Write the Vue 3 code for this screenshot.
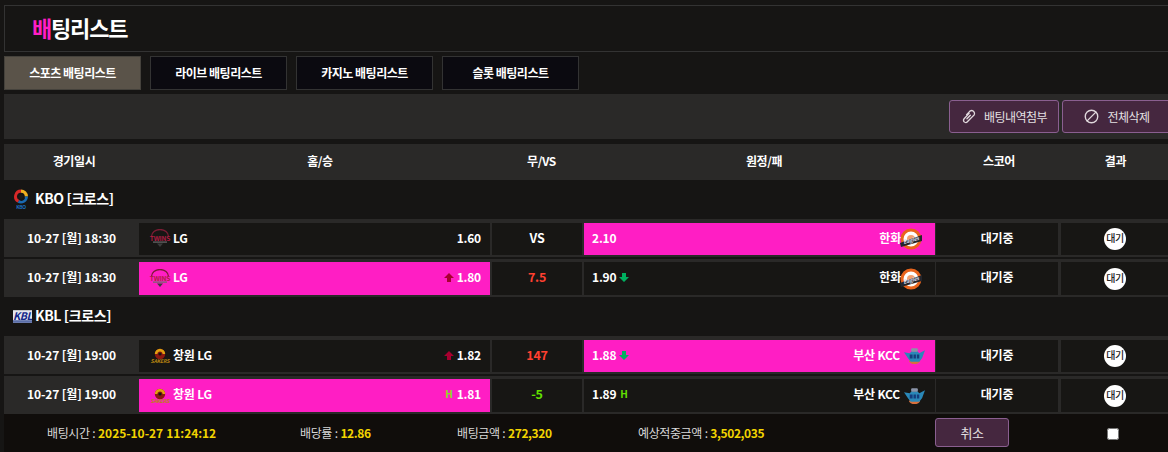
<script setup>
const tabs = ['스포츠 배팅리스트', '라이브 배팅리스트', '카지노 배팅리스트', '슬롯 배팅리스트'];
const headers = ['경기일시', '홈/승', '무/VS', '원정/패', '스코어', '결과'];

const groups = [
  {
    name: 'KBO [크로스]',
    logo: 'kbo',
    rows: [
      {
        time: '10-27 [월] 18:30', home: 'LG', homeLogo: 'twins', homeOdds: '1.60',
        mid: 'VS', midClass: '', away: '한화', awayLogo: 'eagles', awayOdds: '2.10', pick: 'away',
      },
      {
        time: '10-27 [월] 18:30', home: 'LG', homeLogo: 'twins', homeOdds: '1.80', homeMark: 'up',
        mid: '7.5', midClass: 'red', away: '한화', awayLogo: 'eagles', awayOdds: '1.90', awayMark: 'down', pick: 'home',
      },
    ],
  },
  {
    name: 'KBL [크로스]',
    logo: 'kbl',
    rows: [
      {
        time: '10-27 [월] 19:00', home: '창원 LG', homeLogo: 'sakers', homeOdds: '1.82', homeMark: 'up',
        mid: '147', midClass: 'red', away: '부산 KCC', awayLogo: 'kcc', awayOdds: '1.88', awayMark: 'down', pick: 'away',
      },
      {
        time: '10-27 [월] 19:00', home: '창원 LG', homeLogo: 'sakers', homeOdds: '1.81', homeMark: 'h',
        mid: '-5', midClass: 'green', away: '부산 KCC', awayLogo: 'kcc', awayOdds: '1.89', awayMark: 'h', pick: 'home',
      },
    ],
  },
];
</script>

<template>
  <div class="page">
    <svg class="defs" aria-hidden="true">
      <symbol id="kbo" viewBox="0 0 16 20">
        <path d="M8 .5a7 7 0 0 1 7 7h-3.2A3.8 3.8 0 0 0 8 3.7z" fill="#f0b020" />
        <path d="M15 7.5a7 7 0 0 1-10.5 6L6.3 11a3.4 3.4 0 0 0 5.5-3.5z" fill="#1a6ab0" />
        <path d="M4.5 13.5A7 7 0 0 1 8 .5v3.2a3.8 3.8 0 0 0-1.7 7.3z" fill="#d82828" />
        <path d="M8 5.2a2.3 2.3 0 1 1-1.6 4 3 3 0 0 1 1.6-4z" fill="#1c1a18" />
        <text x="8" y="19.5" class="tiny" fill="#1a70c0" font-size="5" text-anchor="middle">KBO</text>
      </symbol>
      <symbol id="kbl" viewBox="0 0 18 12">
        <rect width="18" height="12" fill="#e4e6ee" />
        <rect y="9.5" width="18" height="2.5" fill="#5a6ea8" />
        <text x="9" y="9.6" class="tiny" fill="#14288a" font-size="10" font-weight="700" font-style="italic" text-anchor="middle">KBL</text>
      </symbol>
      <symbol id="twins" viewBox="0 0 24 20">
        <path d="M3.5 7.5a8.5 7 0 0 1 17 0" fill="none" stroke="#7c1c34" stroke-width="1.3" />
        <text x="12" y="11.5" class="tiny" fill="#b01c42" font-size="6.6" font-weight="700" text-anchor="middle">TWINS</text>
        <rect x="5" y="12.5" width="14" height="1.2" fill="#6a6a6a" />
        <path d="M9 14.5h6l-3 3.5z" fill="#3c3c3c" />
      </symbol>
      <symbol id="eagles" viewBox="0 0 22 22">
        <circle cx="11" cy="11" r="9" fill="#fff" stroke="#e8641c" stroke-width="3" />
        <circle cx="11" cy="11" r="4" fill="#f0a070" />
        <path d="M0 15 22 7v6L1 19z" fill="#23252c" />
        <text x="11" y="14" class="tiny" fill="#d8d8e4" font-size="5.4" font-style="italic" text-anchor="middle" transform="rotate(-14 11 12)">Eagles</text>
      </symbol>
      <symbol id="sakers" viewBox="0 0 24 16">
        <circle cx="12" cy="6" r="5.2" fill="#8c1810" />
        <path d="M6.8 6a5.2 5.2 0 0 1 10.4 0h-2.6a2.6 2.6 0 0 0-5.2 0z" fill="#e0a010" />
        <circle cx="12" cy="6" r="1.6" fill="#181410" />
        <text x="12" y="15" class="tiny" fill="#b88410" font-size="5.2" font-weight="700" font-style="italic" text-anchor="middle">SAKERS</text>
      </symbol>
      <symbol id="kcc" viewBox="0 0 22 18">
        <ellipse cx="11" cy="14.5" rx="5.5" ry="3" fill="#d8703c" />
        <path d="M0 5 6 6l2-2h6l2 2 6-3-3 8-3 4H7l-3-4z" fill="#2a88b8" />
        <rect x="7.5" y="1" width="7" height="3.5" rx="1" fill="#8a94a8" />
        <path d="M6 7.5h3v4H6zM10 7.5h2.5v4H10zM13.5 7.5H16v4h-2.5z" fill="#143c7c" />
      </symbol>
    </svg>

    <div class="inner">
      <h1 class="title"><span class="pink">배</span>팅리스트</h1>

      <div class="tabs">
        <div v-for="(tab, i) in tabs" :key="tab" class="tab" :class="{ active: i === 0 }">{{ tab }}</div>
      </div>

      <div class="toolbar">
        <button class="btn">
          <svg viewBox="0 0 24 24" class="btn-icon">
            <path d="M13 7 5 15.5a3.6 3.6 0 0 0 5.2 5L19.5 11a3.6 3.6 0 0 0-5.2-7.6L9 9" />
            <path d="M9.5 15.5 15 10" />
          </svg>
          배팅내역첨부
        </button>
        <button class="btn">
          <svg viewBox="0 0 24 24" class="btn-icon">
            <circle cx="12" cy="12" r="10" />
            <path d="M5 19 19 5" />
          </svg>
          전체삭제
        </button>
      </div>

      <div class="head">
        <div v-for="h in headers" :key="h" class="head-cell">{{ h }}</div>
      </div>

      <template v-for="group in groups" :key="group.name">
        <div class="group">
          <svg class="group-logo" :class="group.logo"><use :href="'#' + group.logo" /></svg>
          <span>{{ group.name }}</span>
        </div>
        <div v-for="(row, i) in group.rows" :key="i" class="row" :class="{ second: i === 1 }">
          <div class="cell text-cell time">{{ row.time }}</div>
          <div class="cell side" :class="{ picked: row.pick === 'home' }">
            <svg class="logo"><use :href="'#' + row.homeLogo" /></svg>
            <span class="team">{{ row.home }}</span>
            <span class="spacer"></span>
            <span v-if="row.homeMark === 'h'" class="mark-h">H</span>
            <svg v-else-if="row.homeMark === 'up'" class="arrow up" viewBox="0 0 10 9"><path d="M5 0 10 5H7v4H3V5H0z" /></svg>
            <span class="odds">{{ row.homeOdds }}</span>
          </div>
          <div class="cell text-cell mid" :class="row.midClass">{{ row.mid }}</div>
          <div class="cell side away" :class="{ picked: row.pick === 'away' }">
            <span class="odds">{{ row.awayOdds }}</span>
            <span v-if="row.awayMark === 'h'" class="mark-h">H</span>
            <svg v-else-if="row.awayMark === 'down'" class="arrow down" viewBox="0 0 10 9"><path d="M5 9 0 4h3V0h4v4h3z" /></svg>
            <span class="spacer"></span>
            <span class="team">{{ row.away }}</span>
            <svg class="logo" :class="row.awayLogo"><use :href="'#' + row.awayLogo" /></svg>
          </div>
          <div class="cell text-cell score">대기중</div>
          <div class="cell result"><span class="badge">대기</span></div>
        </div>
      </template>

      <div class="footer">
        <span class="info w1">배팅시간 : <b>2025-10-27 11:24:12</b></span>
        <span class="info w2">배당률 : <b>12.86</b></span>
        <span class="info w3">배팅금액 : <b>272,320</b></span>
        <span class="info w4">예상적중금액 : <b>3,502,035</b></span>
        <button class="btn cancel">취소</button>
        <input type="checkbox" class="check" />
      </div>
    </div>
  </div>
</template>

<style>
  html, body {
    margin: 0;
    background: #161514;
    overflow: hidden;
  }
</style>

<style scoped>
  .page {
    width: 1168px;
    height: 452px;
    overflow: hidden;
    padding: 5px 0 0 4px;
    box-sizing: border-box;
    font-family: "Noto Sans CJK KR", "Noto Sans", sans-serif;
    font-size: 12px;
    color: #fff;
  }

  .defs {
    display: none;
  }

  .inner {
    width: 1168px;
  }

  .title {
    margin: 0;
    height: 47px;
    box-sizing: border-box;
    border: 1px solid #333;
    padding-left: 27px;
    font-size: 22px;
    line-height: 43px;
    font-weight: 700;
    letter-spacing: -1.2px;
  }

  .pink {
    color: #ff1ec4;
  }

  .tabs {
    display: flex;
    gap: 9px;
    margin-top: 4px;
  }

  .tab {
    width: 137px;
    height: 34px;
    box-sizing: border-box;
    border: 1px solid #333;
    background: #0b0a10;
    font-weight: 700;
    line-height: 31px;
    text-align: center;
    letter-spacing: -0.5px;
  }

  .tab.active {
    background: #5a5349;
    border-color: #45423c;
  }

  .toolbar {
    display: flex;
    justify-content: flex-end;
    gap: 3px;
    height: 45px;
    margin-top: 4px;
    padding: 6px 0 0;
    box-sizing: border-box;
    background: #2a2928;
  }

  .btn {
    display: flex;
    align-items: center;
    justify-content: center;
    gap: 8px;
    width: 110px;
    height: 33px;
    padding: 0;
    border: 1px solid #8a5f90;
    border-radius: 3px;
    background: #45273f;
    color: #e4e0e2;
    font-family: inherit;
    font-size: 12px;
    letter-spacing: -0.5px;
  }

  .btn-icon {
    width: 15px;
    height: 15px;
    fill: none;
    stroke: #e0d8dc;
    stroke-width: 2.2;
    stroke-linecap: round;
    stroke-linejoin: round;
  }

  .head {
    display: grid;
    grid-template-columns: 135px 351px 92px 353px 123px 110px;
    height: 36px;
    margin-top: 5px;
    background: #2a2928;
    font-weight: 700;
    line-height: 34px;
    text-align: center;
    letter-spacing: -0.4px;
  }

  .head-cell {
    padding-left: 5px;
  }

  .head-cell:nth-child(2),
  .head-cell:nth-child(3),
  .head-cell:nth-child(4) {
    padding-left: 11px;
  }

  .group {
    display: flex;
    align-items: center;
    height: 39px;
    padding-left: 9px;
    font-size: 14px;
    font-weight: 700;
    letter-spacing: -0.4px;
  }

  .group span {
    margin-bottom: 4px;
  }

  .group-logo {
    width: 16px;
    height: 20px;
    margin: 0 6px 1px 0;
  }

  .group-logo.kbl {
    width: 19px;
    height: 13px;
    margin: 0 3px 0 0;
  }

  .row {
    display: grid;
    grid-template-columns: 135px 351px 92px 353px 123px 110px;
    height: 38px;
    padding: 4px 0 2px;
    box-sizing: border-box;
    background: #2a2928;
  }

  .row.second {
    height: 38px;
    margin-top: 2px;
    padding-top: 3px;
  }

  .cell {
    display: flex;
    align-items: center;
    justify-content: center;
    background: #171614;
    font-weight: 700;
    letter-spacing: -0.2px;
  }

  .text-cell {
    padding-bottom: 4px;
    box-sizing: border-box;
  }

  .time {
    background: #2a2928;
    letter-spacing: -0.1px;
  }

  .mid {
    margin-left: 2px;
    font-size: 12.5px;
  }

  .mid.red {
    color: #ff4030;
  }

  .mid.green {
    color: #62e000;
  }

  .side {
    justify-content: flex-start;
    padding: 0 9px;
  }

  .side.away {
    margin-left: 2px;
    padding: 0 13px 0 8px;
  }

  .picked {
    background: #ff1ec4;
  }

  .spacer {
    flex: 1;
  }

  .team,
  .odds {
    margin-bottom: 4px;
  }

  .logo {
    width: 24px;
    height: 20px;
    margin-right: 1px;
  }

  .away .team {
    margin-right: -1px;
  }

  .away .logo {
    width: 22px;
    height: 22px;
    margin: 0;
  }

  .away .logo.kcc {
    width: 21px;
    height: 18px;
    margin: 0 -3px 0 5px;
  }

  .arrow {
    width: 10px;
    height: 9px;
    margin: 0 3px 2px 0;
  }

  .arrow.up {
    fill: #a80030;
  }

  .arrow.down {
    fill: #00b060;
    margin: 0 0 2px 3px;
  }

  .mark-h {
    margin: 0 4px 4px 0;
    color: #84e020;
    font-size: 10px;
  }

  .away .mark-h {
    margin: 0 0 4px 4px;
    color: #62e000;
  }

  .score {
    margin-left: 1px;
  }

  .result {
    margin-left: 3px;
    justify-content: flex-start;
    padding-left: 43px;
  }

  .badge {
    display: flex;
    align-items: center;
    justify-content: center;
    width: 22px;
    height: 22px;
    padding-bottom: 3px;
    box-sizing: border-box;
    border-radius: 50%;
    background: #fff;
    color: #222;
    font-size: 10px;
    font-weight: 500;
    letter-spacing: -0.5px;
  }

  .footer {
    display: flex;
    align-items: center;
    height: 38px;
    padding-left: 43px;
    background: #100d0b;
    color: #d8d8d8;
    letter-spacing: -0.4px;
    word-spacing: 0.5px;
  }

  .info {
    margin-bottom: 2px;
  }

  .info b {
    color: #f2d400;
    letter-spacing: -0.4px;
  }

  .w1 {
    width: 253px;
  }

  .w1 b {
    letter-spacing: -0.05px;
  }

  .w2 {
    width: 157px;
  }

  .w3 {
    width: 181px;
  }

  .w4 {
    width: 297px;
  }

  .cancel {
    width: 74px;
    height: 29px;
    margin-top: -1px;
    font-size: 13px;
  }

  .check {
    width: 12px;
    height: 12px;
    margin: 1px 0 0 98px;
  }
</style>
